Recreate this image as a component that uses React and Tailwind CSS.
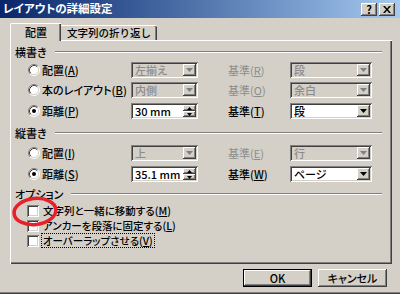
const FONT = "font-['Noto_Sans_CJK_JP',sans-serif] [font-feature-settings:'palt'] font-medium";
const RAISED = "shadow-[inset_-1px_-1px_#404040,inset_1px_1px_#ffffff,inset_-2px_-2px_#808080]";
const SUNKEN = "shadow-[inset_1px_1px_#808080,inset_-1px_-1px_#ffffff,inset_2px_2px_#404040,inset_-2px_-2px_#d4d0c8]";

function Radio({ checked }) {
  return (
    <svg width="12" height="12" viewBox="0 0 12 12" className="shrink-0">
      <circle cx="6" cy="6" r="5" fill="#fff" />
      <path d="M2.11 9.89 A5.5 5.5 0 0 1 9.89 2.11" stroke="#808080" fill="none" />
      <path d="M9.89 2.11 A5.5 5.5 0 0 1 2.11 9.89" stroke="#fff" fill="none" />
      <path d="M2.82 9.18 A4.5 4.5 0 0 1 9.18 2.82" stroke="#404040" fill="none" />
      <path d="M9.18 2.82 A4.5 4.5 0 0 1 2.82 9.18" stroke="#d4d0c8" fill="none" />
      {checked && <circle cx="6" cy="6" r="2" fill="#000" />}
    </svg>
  );
}

function Combo({ value, disabled, className }) {
  return (
    <div className={`flex items-center h-[16px] p-[2px] ${SUNKEN} ${disabled ? "bg-[#d4d0c8]" : "bg-white"} ${className}`}>
      <span className={`flex-1 pl-[2px] text-[11px] leading-none whitespace-nowrap ${disabled ? "text-[#8c8c8c]" : "text-black"}`}>
        {value}
      </span>
      <div className={`w-[13px] h-full bg-[#d4d0c8] flex items-center justify-center ${RAISED}`}>
        <svg width="7" height="4" viewBox="0 0 7 4">
          <path d="M0 0h7L3.5 4z" fill={disabled ? "#808080" : "#000"} />
        </svg>
      </div>
    </div>
  );
}

function Spin({ value }) {
  return (
    <div className={`flex items-center h-[16px] w-[67px] p-[2px] bg-white ${SUNKEN}`}>
      <span className="flex-1 pl-[2px] text-[11px] leading-none whitespace-nowrap text-black">{value}</span>
      <div className="w-[13px] h-full flex flex-col">
        <div className={`flex-1 bg-[#d4d0c8] flex items-center justify-center ${RAISED}`}>
          <svg width="5" height="3" viewBox="0 0 5 3">
            <path d="M0 3h5L2.5 0z" fill="#000" />
          </svg>
        </div>
        <div className={`flex-1 bg-[#d4d0c8] flex items-center justify-center ${RAISED}`}>
          <svg width="5" height="3" viewBox="0 0 5 3">
            <path d="M0 0h5L2.5 3z" fill="#000" />
          </svg>
        </div>
      </div>
    </div>
  );
}

function Group({ title, className }) {
  return (
    <div className={`flex items-center h-[14px] pl-[4px] pr-[10px] ${className}`}>
      <span className="text-[11px] leading-none whitespace-nowrap text-black">{title}</span>
      <div className="flex-1 ml-[8px] h-[2px] border-t border-[#808080] border-b border-b-white" />
    </div>
  );
}

function Row({ checked, label, k, field, label2, k2, value2, enabled, className }) {
  const dis = !enabled;
  return (
    <div className={`flex items-center h-[16px] pl-[17px] ${className}`}>
      <div className="w-[103px] flex items-center gap-[2px]">
        <Radio checked={checked} />
        <span className="text-[11px] leading-none whitespace-nowrap text-black">
          {label}(<u>{k}</u>)
        </span>
      </div>
      {field}
      <span className={`w-[62px] ml-[30px] text-[11px] leading-none whitespace-nowrap ${dis ? "text-[#8c8c8c] font-normal" : "text-black"}`}>
        {label2}(<u>{k2}</u>)
      </span>
      <Combo value={value2} disabled={dis} className="w-[82px]" />
    </div>
  );
}

function Check({ children, focus, className }) {
  return (
    <div className={`flex items-center h-[15px] pl-[16px] ${className}`}>
      <div className={`w-[12px] h-[12px] bg-white ${SUNKEN}`} />
      <span
        className={`ml-[2px] px-[1px] text-[10.5px] leading-[13px] whitespace-nowrap text-black border ${
          focus ? "border-dotted border-black" : "border-transparent"
        }`}
      >
        {children}
      </span>
    </div>
  );
}

export default function App() {
  return (
    <div className={`relative w-[400px] h-[294px] bg-[#d4d0c8] overflow-hidden ${FONT} shadow-[inset_0_-1px_#404040,inset_0_-2px_#808080]`}>
      {/* Title bar */}
      <div className="h-[18px] flex items-center bg-linear-to-r from-[#0a246a] to-[#a6caf0] pl-[3px] pr-[5px]">
        <span className="flex-1 text-white text-[11.5px] font-bold leading-none">レイアウトの詳細設定</span>
        <div className={`w-[16px] h-[13px] bg-[#d4d0c8] flex items-center justify-center text-[11px] font-bold leading-none text-black ${RAISED}`}>
          ?
        </div>
        <div className={`ml-[2px] w-[16px] h-[13px] bg-[#d4d0c8] flex items-center justify-center ${RAISED}`}>
          <svg width="8" height="7" viewBox="0 0 8 7">
            <path d="M0 0h2l2 2.5L6 0h2L5 3.5 8 7H6L4 4.5 2 7H0l3-3.5z" fill="#000" />
          </svg>
        </div>
      </div>

      {/* Tabs */}
      <div className="mt-[5px] h-[17px] pl-[10px] flex items-start">
        <div className="relative z-10 w-[51px] h-[18px] bg-[#d4d0c8] border-t border-l border-white rounded-tl-[2px] shadow-[inset_-1px_0_#404040,inset_-2px_0_#808080] flex items-center justify-center text-[11px] leading-none text-black">
          配置
        </div>
        <div className="mt-[2px] w-[96px] h-[15px] border-t border-white rounded-tr-[2px] shadow-[inset_-1px_0_#404040,inset_-2px_0_#808080] flex items-center justify-center text-[10.5px] leading-none text-black [font-feature-settings:normal]">
          文字列の折り返し
        </div>
      </div>

      {/* Panel */}
      <div className="ml-[10px] w-[382px] h-[224px] border-t border-l border-white shadow-[inset_-1px_-1px_#404040,inset_-2px_-2px_#808080] flex flex-col">
        <Group title="横書き" className="mt-[4px]" />
        <Row
          className="mt-[3px]"
          label="配置"
          k="A"
          field={<Combo value="左揃え" disabled className="w-[67px]" />}
          label2="基準"
          k2="R"
          value2="段"
        />
        <Row
          className="mt-[4px]"
          label="本のレイアウト"
          k="B"
          field={<Combo value="内側" disabled className="w-[67px]" />}
          label2="基準"
          k2="O"
          value2="余白"
        />
        <Row
          className="mt-[5px]"
          checked
          enabled
          label="距離"
          k="P"
          field={<Spin value="30 mm" />}
          label2="基準"
          k2="T"
          value2="段"
        />

        <Group title="縦書き" className="mt-[7px]" />
        <Row
          className="mt-[5px]"
          label="配置"
          k="I"
          field={<Combo value="上" disabled className="w-[67px]" />}
          label2="基準"
          k2="E"
          value2="行"
        />
        <Row
          className="mt-[5px]"
          checked
          enabled
          label="距離"
          k="S"
          field={<Spin value="35.1 mm" />}
          label2="基準"
          k2="W"
          value2="ページ"
        />

        <Group title="オプション" className="mt-[5px]" />
        <Check className="mt-[2px]">
          文字列と一緒に移動する(<u>M</u>)
        </Check>
        <Check>
          アンカーを段落に固定する(<u>L</u>)
        </Check>
        <Check focus>
          オーバーラップさせる(<u>V</u>)
        </Check>
      </div>

      {/* Buttons */}
      <div className="mt-[5px] flex justify-end gap-[6px] pr-[13px]">
        <div className="w-[69px] h-[18px] border border-black">
          <div className={`w-full h-full flex items-center justify-center text-[11px] leading-none text-black ${RAISED}`}>
            OK
          </div>
        </div>
        <div className={`w-[69px] h-[18px] flex items-center justify-center text-[11px] leading-none text-black ${RAISED}`}>
          キャンセル
        </div>
      </div>

      {/* Red annotation ring */}
      <svg className="absolute left-[11px] top-[195px]" width="48" height="33" viewBox="0 0 48 33">
        <ellipse cx="24" cy="16.5" rx="21" ry="13" fill="none" stroke="#e8202a" strokeWidth="3.5" transform="rotate(-6 24 16.5)" />
      </svg>
    </div>
  );
}
